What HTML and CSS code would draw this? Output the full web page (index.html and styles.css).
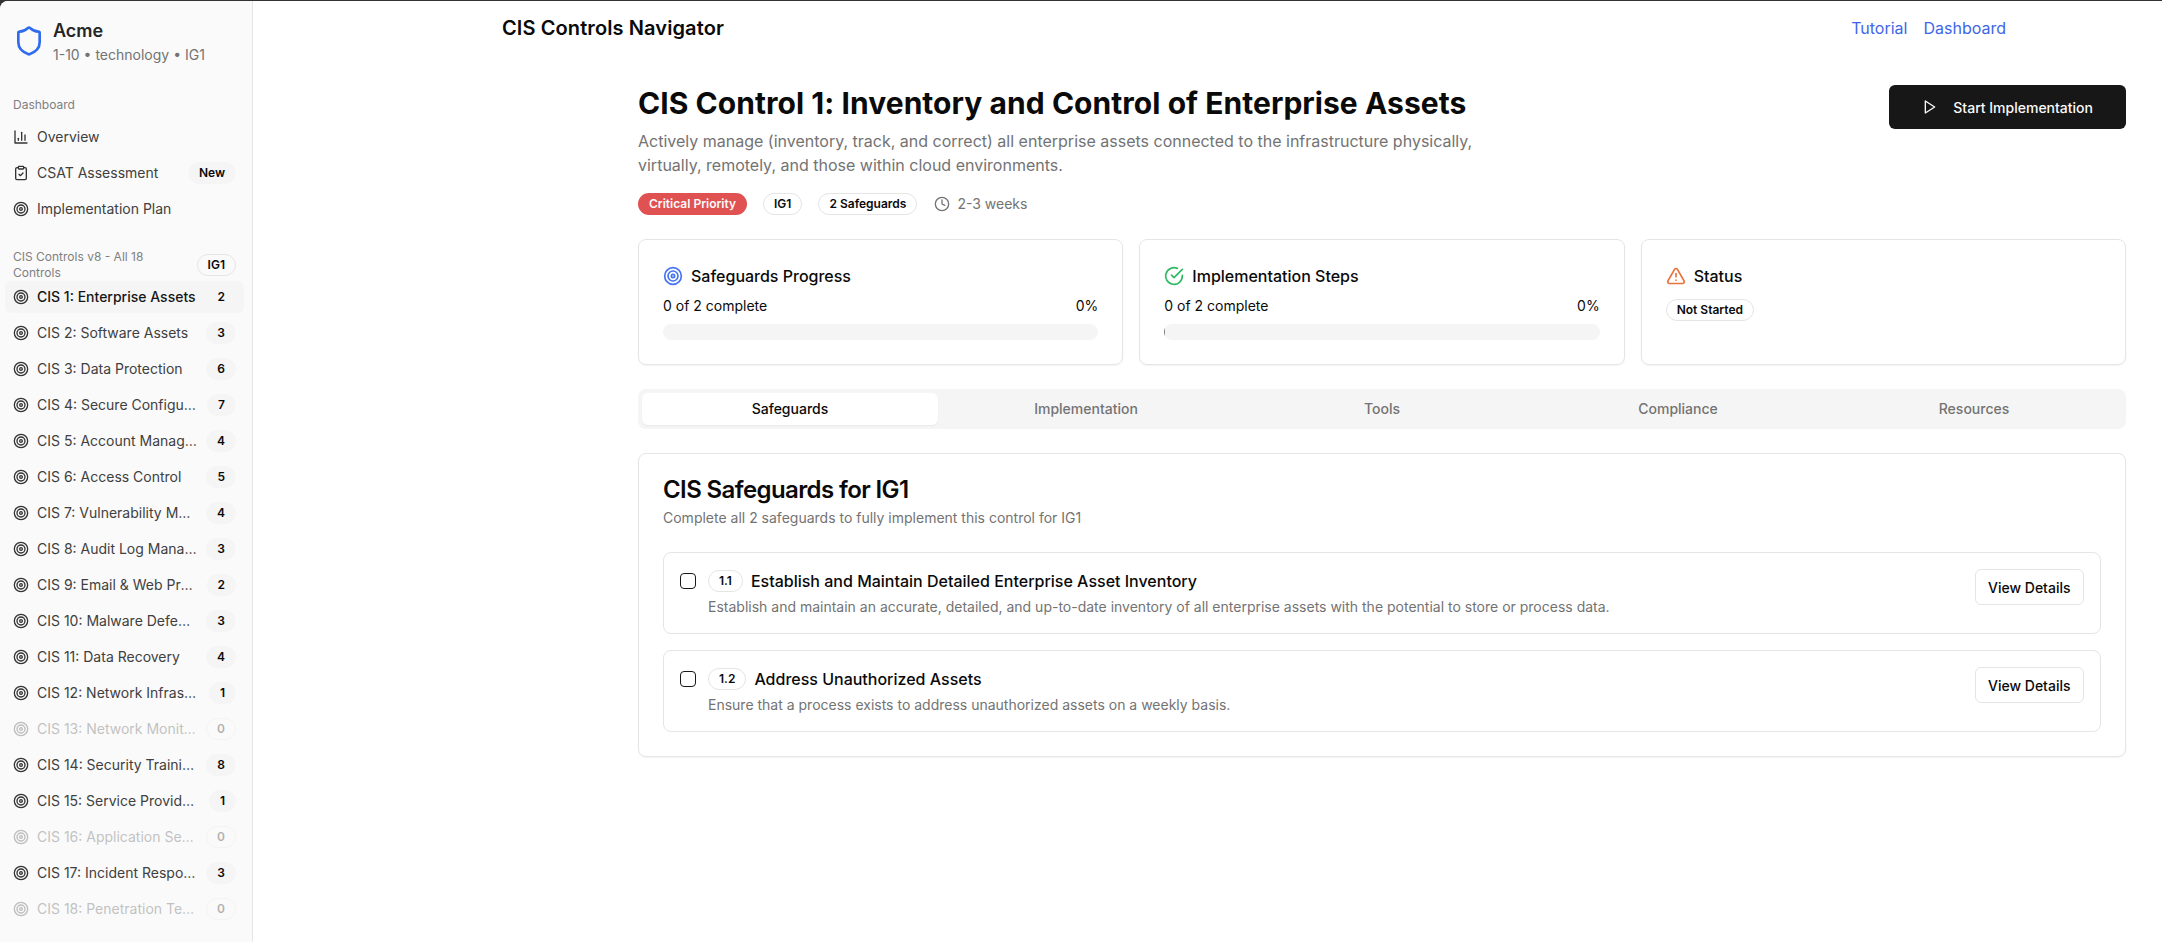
FILE: index.html
```html
<!DOCTYPE html>
<html lang="en">

<head>
    <meta charset="UTF-8" />
    <meta name="viewport" content="width=device-width, initial-scale=1.0" />
    <title>CIS Controls Navigator</title>
    <link rel="stylesheet" href="styles.css">
</head>

<body>
    <!-- Icons -->
    <svg class="icon-defs" aria-hidden="true">
        <symbol id="i-shield" viewBox="0 0 24 24">
            <path d="M20 13c0 5-3.5 7.5-7.66 8.95a1 1 0 0 1-.67-.01C7.5 20.5 4 18 4 13V6a1 1 0 0 1 1-1c2 0 4.5-1.2 6.24-2.72a1.17 1.17 0 0 1 1.52 0C14.51 3.81 17 5 19 5a1 1 0 0 1 1 1z" />
        </symbol>
        <symbol id="i-chart" viewBox="0 0 24 24">
            <path d="M3 3v18h18" />
            <path d="M18 17V9" />
            <path d="M13 17V5" />
            <path d="M8 17v-3" />
        </symbol>
        <symbol id="i-clipboard" viewBox="0 0 24 24">
            <rect x="8" y="2" width="8" height="4" rx="1" />
            <path d="M16 4h2a2 2 0 0 1 2 2v14a2 2 0 0 1-2 2H6a2 2 0 0 1-2-2V6a2 2 0 0 1 2-2h2" />
            <path d="m9 14 2 2 4-4" />
        </symbol>
        <symbol id="i-target" viewBox="0 0 24 24">
            <circle cx="12" cy="12" r="10" />
            <circle cx="12" cy="12" r="6" />
            <circle cx="12" cy="12" r="2" />
        </symbol>
        <symbol id="i-clock" viewBox="0 0 24 24">
            <circle cx="12" cy="12" r="10" />
            <polyline points="12 6 12 12 16 14" />
        </symbol>
        <symbol id="i-play" viewBox="0 0 24 24">
            <polygon points="5 3 19 12 5 21 5 3" />
        </symbol>
        <symbol id="i-check" viewBox="0 0 24 24">
            <path d="M22 11.08V12a10 10 0 1 1-5.93-9.14" />
            <path d="m9 11 3 3L22 4" />
        </symbol>
        <symbol id="i-alert" viewBox="0 0 24 24">
            <path d="m21.73 18-8-14a2 2 0 0 0-3.48 0l-8 14A2 2 0 0 0 4 21h16a2 2 0 0 0 1.73-3Z" />
            <path d="M12 9v4" />
            <path d="M12 17h.01" />
        </symbol>
    </svg>

    <div class="app">
        <!-- Sidebar -->
        <aside class="sidebar">
            <div class="org">
                <svg class="icon org-icon"><use href="#i-shield" /></svg>
                <div>
                    <div class="org-name">Acme</div>
                    <div class="org-meta">1-10 • technology • IG1</div>
                </div>
            </div>

            <div class="side-group">
                <div class="side-label">Dashboard</div>
                <a class="side-item"><svg class="icon"><use href="#i-chart" /></svg><span class="side-text">Overview</span></a>
                <a class="side-item"><svg class="icon"><use href="#i-clipboard" /></svg><span class="side-text">CSAT Assessment</span><span class="badge badge-soft">New</span></a>
                <a class="side-item"><svg class="icon"><use href="#i-target" /></svg><span class="side-text">Implementation Plan</span></a>
            </div>

            <div class="side-group side-group-controls">
                <div class="side-label side-label-wrap"><span>CIS Controls v8 - All 18 Controls</span><span class="badge badge-outline">IG1</span></div>
                <a class="side-item active"><svg class="icon"><use href="#i-target" /></svg><span class="side-text">CIS 1: Enterprise Assets</span><span class="badge badge-soft">2</span></a>
                <a class="side-item"><svg class="icon"><use href="#i-target" /></svg><span class="side-text">CIS 2: Software Assets</span><span class="badge badge-soft">3</span></a>
                <a class="side-item"><svg class="icon"><use href="#i-target" /></svg><span class="side-text">CIS 3: Data Protection</span><span class="badge badge-soft">6</span></a>
                <a class="side-item"><svg class="icon"><use href="#i-target" /></svg><span class="side-text">CIS 4: Secure Configuration</span><span class="badge badge-soft">7</span></a>
                <a class="side-item"><svg class="icon"><use href="#i-target" /></svg><span class="side-text">CIS 5: Account Management</span><span class="badge badge-soft">4</span></a>
                <a class="side-item"><svg class="icon"><use href="#i-target" /></svg><span class="side-text">CIS 6: Access Control</span><span class="badge badge-soft">5</span></a>
                <a class="side-item"><svg class="icon"><use href="#i-target" /></svg><span class="side-text">CIS 7: Vulnerability Management</span><span class="badge badge-soft">4</span></a>
                <a class="side-item"><svg class="icon"><use href="#i-target" /></svg><span class="side-text">CIS 8: Audit Log Management</span><span class="badge badge-soft">3</span></a>
                <a class="side-item"><svg class="icon"><use href="#i-target" /></svg><span class="side-text">CIS 9: Email &amp; Web Protections</span><span class="badge badge-soft">2</span></a>
                <a class="side-item"><svg class="icon"><use href="#i-target" /></svg><span class="side-text">CIS 10: Malware Defenses</span><span class="badge badge-soft">3</span></a>
                <a class="side-item"><svg class="icon"><use href="#i-target" /></svg><span class="side-text">CIS 11: Data Recovery</span><span class="badge badge-soft">4</span></a>
                <a class="side-item"><svg class="icon"><use href="#i-target" /></svg><span class="side-text">CIS 12: Network Infrastructure</span><span class="badge badge-soft">1</span></a>
                <a class="side-item disabled"><svg class="icon"><use href="#i-target" /></svg><span class="side-text">CIS 13: Network Monitoring</span><span class="badge badge-outline">0</span></a>
                <a class="side-item"><svg class="icon"><use href="#i-target" /></svg><span class="side-text">CIS 14: Security Training</span><span class="badge badge-soft">8</span></a>
                <a class="side-item"><svg class="icon"><use href="#i-target" /></svg><span class="side-text">CIS 15: Service Providers</span><span class="badge badge-soft">1</span></a>
                <a class="side-item disabled"><svg class="icon"><use href="#i-target" /></svg><span class="side-text">CIS 16: Application Security</span><span class="badge badge-outline">0</span></a>
                <a class="side-item"><svg class="icon"><use href="#i-target" /></svg><span class="side-text">CIS 17: Incident Response</span><span class="badge badge-soft">3</span></a>
                <a class="side-item disabled"><svg class="icon"><use href="#i-target" /></svg><span class="side-text">CIS 18: Penetration Testing</span><span class="badge badge-outline">0</span></a>
            </div>
        </aside>

        <!-- Main content -->
        <div class="main">
            <header class="topbar">
                <div class="brand">CIS Controls Navigator</div>
                <nav class="top-links">
                    <a>Tutorial</a>
                    <a>Dashboard</a>
                </nav>
            </header>

            <main class="content">
                <section class="hero">
                    <div class="hero-text">
                        <h1>CIS Control 1: Inventory and Control of Enterprise Assets</h1>
                        <p class="hero-desc">Actively manage (inventory, track, and correct) all enterprise assets connected to the infrastructure physically, virtually, remotely, and those within cloud environments.</p>
                        <div class="hero-tags">
                            <span class="badge badge-red">Critical Priority</span>
                            <span class="badge badge-outline">IG1</span>
                            <span class="badge badge-outline">2 Safeguards</span>
                            <span class="duration"><svg class="icon"><use href="#i-clock" /></svg>2-3 weeks</span>
                        </div>
                    </div>
                    <button class="btn-primary"><svg class="icon"><use href="#i-play" /></svg>Start Implementation</button>
                </section>

                <section class="stats">
                    <div class="stat-card">
                        <div class="stat-title"><svg class="icon icon-20 blue"><use href="#i-target" /></svg>Safeguards Progress</div>
                        <div class="stat-row"><span>0 of 2 complete</span><span>0%</span></div>
                        <div class="progress"></div>
                    </div>
                    <div class="stat-card">
                        <div class="stat-title"><svg class="icon icon-20 green"><use href="#i-check" /></svg>Implementation Steps</div>
                        <div class="stat-row"><span>0 of 2 complete</span><span>0%</span></div>
                        <div class="progress"><div class="progress-tick"></div></div>
                    </div>
                    <div class="stat-card">
                        <div class="stat-title"><svg class="icon icon-20 orange"><use href="#i-alert" /></svg>Status</div>
                        <div class="stat-status"><span class="badge badge-outline">Not Started</span></div>
                    </div>
                </section>

                <div class="tabs">
                    <div class="tab active">Safeguards</div>
                    <div class="tab">Implementation</div>
                    <div class="tab">Tools</div>
                    <div class="tab">Compliance</div>
                    <div class="tab">Resources</div>
                </div>

                <section class="panel">
                    <h2>CIS Safeguards for IG1</h2>
                    <p class="panel-sub">Complete all 2 safeguards to fully implement this control for IG1</p>

                    <div class="safeguards">
                        <div class="safeguard">
                            <input class="check" type="checkbox" />
                            <div class="safeguard-body">
                                <div class="safeguard-head">
                                    <span class="badge badge-outline">1.1</span>
                                    <span class="safeguard-title">Establish and Maintain Detailed Enterprise Asset Inventory</span>
                                </div>
                                <p class="safeguard-desc">Establish and maintain an accurate, detailed, and up-to-date inventory of all enterprise assets with the potential to store or process data.</p>
                            </div>
                            <button class="btn-outline">View Details</button>
                        </div>
                        <div class="safeguard">
                            <input class="check" type="checkbox" />
                            <div class="safeguard-body">
                                <div class="safeguard-head">
                                    <span class="badge badge-outline">1.2</span>
                                    <span class="safeguard-title">Address Unauthorized Assets</span>
                                </div>
                                <p class="safeguard-desc">Ensure that a process exists to address unauthorized assets on a weekly basis.</p>
                            </div>
                            <button class="btn-outline">View Details</button>
                        </div>
                    </div>
                </section>
            </main>
        </div>
    </div>
</body>

</html>
```

FILE: styles.css
```css
* {
    box-sizing: border-box;
}

html,
body {
    margin: 0;
    padding: 0;
    height: 100%;
    overflow: hidden;
}

body {
    padding-top: 1px;
    background-color: #333;
    font-family: 'Inter', sans-serif;
    font-size: 14px;
    line-height: 20px;
    color: #0a0a0a;
}

.icon-defs {
    display: none;
}

.icon {
    width: 16px;
    height: 16px;
    flex-shrink: 0;
    fill: none;
    stroke: currentColor;
    stroke-width: 2;
    stroke-linecap: round;
    stroke-linejoin: round;
}

.icon-20 {
    width: 20px;
    height: 20px;
}

.blue {
    color: #4474f0;
}

.green {
    color: #2fb964;
}

.orange {
    color: #e8743b;
}

.app {
    display: flex;
    height: 100%;
    background-color: #fff;
    border-top-left-radius: 8px;
    overflow: hidden;
}

/* Sidebar */
.sidebar {
    width: 253px;
    flex-shrink: 0;
    background-color: #fafafa;
    border-right: 1px solid #e5e5e5;
    color: #404040;
}

.org {
    display: flex;
    align-items: center;
    gap: 8px;
    height: 80px;
    padding: 0 13px;
}

.org-icon {
    width: 32px;
    height: 32px;
    color: #2f6bed;
}

.org-name {
    font-size: 18px;
    line-height: 28px;
    font-weight: 600;
    color: #262626;
}

.org-meta {
    line-height: 20px;
    color: #737373;
}

.side-group {
    display: flex;
    flex-direction: column;
    gap: 4px;
    padding: 8px 8px 8px 5px;
}

.side-group-controls {
    padding-top: 16px;
}

.side-label {
    display: flex;
    align-items: center;
    min-height: 32px;
    margin-bottom: -4px;
    padding: 0 8px;
    font-size: 12px;
    line-height: 16px;
    color: #808080;
}

.side-label-wrap {
    justify-content: space-between;
    gap: 8px;
}

.side-item {
    display: flex;
    align-items: center;
    gap: 8px;
    height: 32px;
    padding: 0 8px;
    border-radius: 6px;
}

.side-item .icon {
    color: #333;
}

.side-item.active {
    background-color: #f5f5f5;
    color: #171717;
    font-weight: 500;
}

.side-item.disabled {
    opacity: 0.3;
}

.side-text {
    flex: 1;
    min-width: 0;
    margin-right: 0.8px;
    white-space: nowrap;
    overflow: hidden;
    text-overflow: ellipsis;
}

/* Badges */
.badge {
    display: inline-flex;
    flex-shrink: 0;
    align-items: center;
    height: 22px;
    padding: 0 10px;
    border: 1px solid transparent;
    border-radius: 999px;
    font-size: 12px;
    line-height: 16px;
    font-weight: 600;
    color: #0a0a0a;
}

.badge-soft {
    background-color: #f5f5f5;
}

.badge-outline {
    border-color: #e5e5e5;
}

.badge-red {
    background-color: #e05252;
    color: #fafafa;
}

/* Top bar */
.main {
    flex: 1;
    min-width: 0;
}

.topbar {
    display: flex;
    justify-content: space-between;
    align-items: center;
    height: 54px;
    padding: 0 156px 0 249px;
}

.brand {
    font-size: 20px;
    line-height: 28px;
    font-weight: 600;
    letter-spacing: 0.1px;
}

.top-links {
    display: flex;
    gap: 16px;
    font-size: 16px;
    line-height: 24px;
    color: #3f66e8;
}

/* Page content */
.content {
    padding: 30px 36px 0 385px;
}

.hero {
    display: flex;
    justify-content: space-between;
    align-items: flex-start;
    gap: 24px;
    margin-bottom: 24px;
}

.hero-text {
    max-width: 896px;
}

h1 {
    margin: 0 0 8px;
    font-size: 30px;
    line-height: 36px;
    font-weight: 700;
    letter-spacing: 0.05px;
}

.hero-desc {
    margin: 0 0 16px;
    font-size: 16px;
    line-height: 24px;
    color: #737373;
}

.hero-tags {
    display: flex;
    align-items: center;
    gap: 16px;
}

.duration {
    display: flex;
    align-items: center;
    gap: 7px;
    margin-left: 1px;
    color: #737373;
}

.btn-primary {
    display: flex;
    align-items: center;
    gap: 15px;
    height: 44px;
    padding: 0 33px;
    border: none;
    border-radius: 6px;
    background-color: #171717;
    color: #fafafa;
    font-family: inherit;
    font-size: 14px;
    font-weight: 500;
}

/* Stat cards */
.stats {
    display: grid;
    grid-template-columns: repeat(3, 1fr);
    gap: 16px;
    margin-bottom: 24px;
}

.stat-card {
    height: 126px;
    padding: 24px;
    border: 1px solid #e5e5e5;
    border-radius: 8px;
    box-shadow: 0 1px 2px rgba(0, 0, 0, 0.05);
}

.stat-title {
    display: flex;
    align-items: center;
    gap: 8px;
    margin-bottom: 8px;
    font-size: 16px;
    line-height: 24px;
    font-weight: 500;
}

.stat-row {
    display: flex;
    justify-content: space-between;
    margin-bottom: 8px;
}

.stat-status {
    display: flex;
    margin-top: 11px;
}

.progress {
    height: 16px;
    border-radius: 999px;
    background-color: #f5f5f5;
    overflow: hidden;
}

.progress-tick {
    width: 1px;
    height: 10px;
    margin-top: 3px;
    background-color: #777;
}

/* Tabs */
.tabs {
    display: grid;
    grid-template-columns: repeat(5, 1fr);
    height: 40px;
    padding: 4px;
    margin-bottom: 24px;
    border-radius: 8px;
    background-color: #f5f5f5;
}

.tab {
    display: flex;
    justify-content: center;
    align-items: center;
    border-radius: 6px;
    font-weight: 500;
    color: #737373;
}

.tab.active {
    background-color: #fff;
    color: #0a0a0a;
    box-shadow: 0 1px 2px rgba(0, 0, 0, 0.05);
}

/* Safeguards panel */
.panel {
    padding: 24px;
    border: 1px solid #e5e5e5;
    border-radius: 8px;
    box-shadow: 0 1px 2px rgba(0, 0, 0, 0.05);
}

h2 {
    margin: 0 0 6px;
    font-size: 24px;
    line-height: 24px;
    font-weight: 600;
    letter-spacing: -0.6px;
}

.panel-sub {
    margin: 0 0 24px;
    color: #737373;
}

.safeguards {
    display: flex;
    flex-direction: column;
    gap: 16px;
}

.safeguard {
    display: flex;
    align-items: flex-start;
    gap: 12px;
    height: 82px;
    padding: 16px;
    border: 1px solid #e5e5e5;
    border-radius: 8px;
}

.check {
    appearance: none;
    width: 16px;
    height: 16px;
    margin: 4px 0 0;
    flex-shrink: 0;
    border: 1px solid #171717;
    border-radius: 4px;
    background-color: #fff;
}

.safeguard-body {
    flex: 1;
    min-width: 0;
}

.safeguard-head {
    display: flex;
    align-items: center;
    gap: 8px;
    height: 24px;
    margin-bottom: 4px;
}

.safeguard-title {
    font-size: 16px;
    line-height: 24px;
    font-weight: 500;
}

.safeguard-desc {
    margin: 0;
    color: #737373;
}

.btn-outline {
    height: 36px;
    padding: 0 12.5px;
    border: 1px solid #e5e5e5;
    border-radius: 6px;
    background-color: #fff;
    color: #0a0a0a;
    font-family: inherit;
    font-size: 14px;
    font-weight: 500;
}
```
